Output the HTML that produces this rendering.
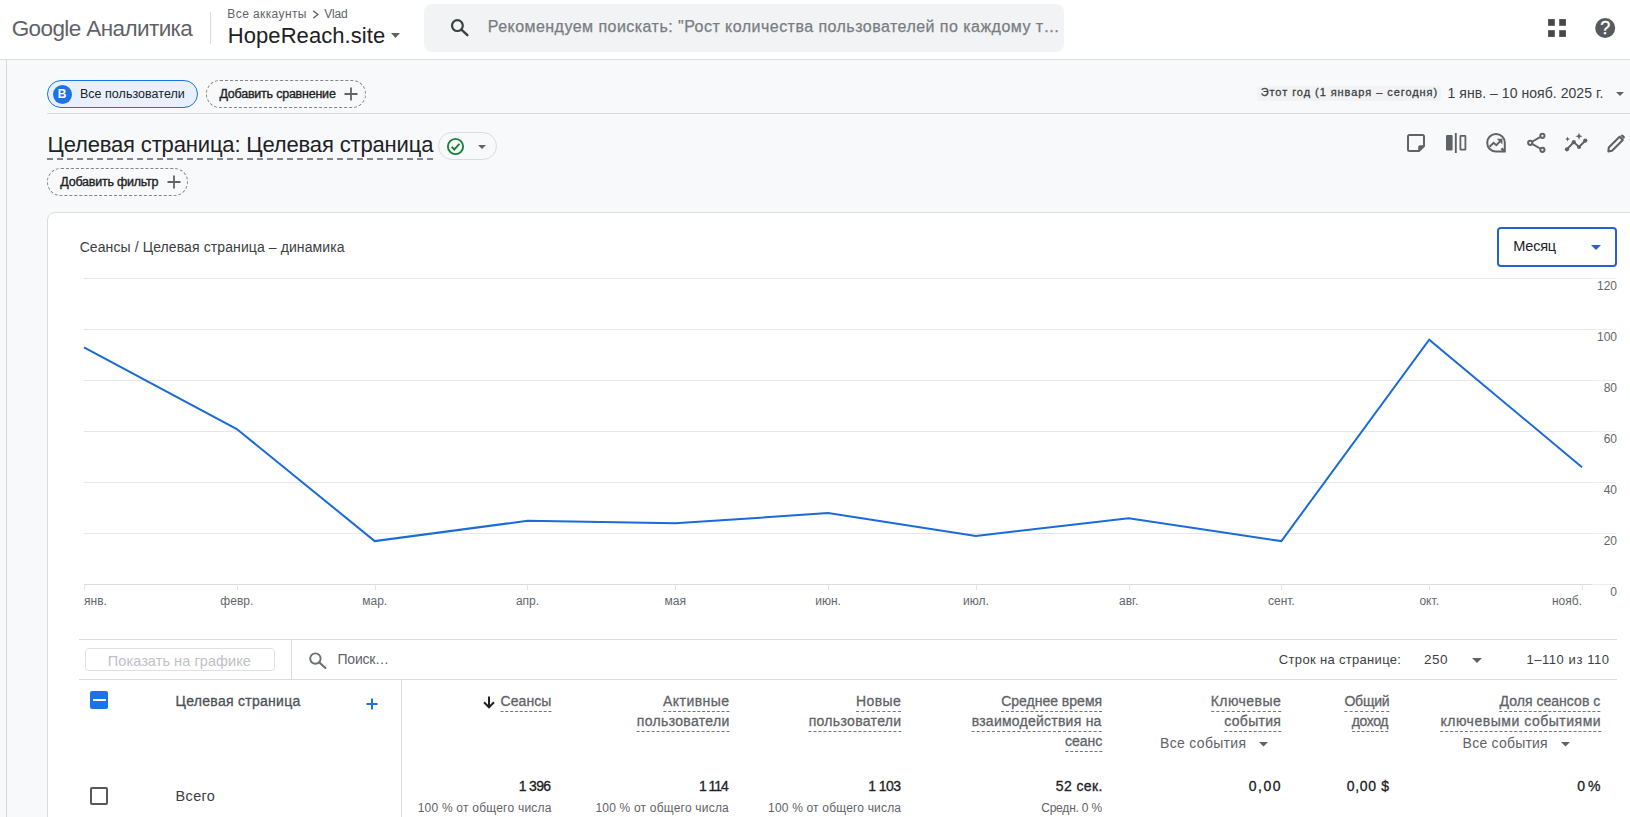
<!DOCTYPE html>
<html lang="ru">
<head>
<meta charset="utf-8">
<title>Google Аналитика</title>
<style>
*{box-sizing:border-box;margin:0;padding:0}
html,body{width:1630px;height:817px;overflow:hidden;background:#f8f9fa;font-family:"Liberation Sans",sans-serif;color:#202124}
#app{position:relative;width:1630px;height:817px;overflow:hidden}
.abs{position:absolute}
.t{position:absolute;white-space:nowrap;line-height:20px;height:20px}
.r{text-align:right}
#hdr{left:0;top:0;width:1630px;height:60px;background:#fff;border-bottom:1px solid #dadce0}
#rail{left:0;top:60px;width:7px;height:757px;background:#f8f9fa;border-right:1px solid #d5d7da}
#search{left:424px;top:4px;width:640px;height:48px;background:#f1f3f4;border-radius:8px}
.chip{position:absolute;height:28px;border-radius:14px}
#card{left:47px;top:212px;width:1600px;height:700px;background:#fff;border:1px solid #dadce0;border-radius:8px}
.hl{position:absolute;height:1px;background:#dadce0}
.vl{position:absolute;width:1px;background:#dadce0}
.du{border-bottom:1px dashed #80868b}
.mh{font-size:14px;color:#5f6368;-webkit-text-stroke:0.3px #5f6368}
.mh::after{content:"";position:absolute;left:0;right:0;top:19.8px;border-top:1px dashed #70757a}
.tv{font-size:14px;color:#202124;-webkit-text-stroke:0.3px #202124}
.ts{font-size:12px;color:#5f6368}
/*FIT*/
#logo{letter-spacing:-0.6px;transform:translateX(0.18px)}
#crumb1{letter-spacing:0.4px;transform:translateX(-0.65px)}
#crumb2{letter-spacing:-0.15px;transform:translateX(1.13px)}
#prop{letter-spacing:0.061px;transform:translateX(-0.18px)}
#sph{letter-spacing:0.463px;transform:translateX(-0.3px)}
#chip1{letter-spacing:0.03px;transform:translateX(-0.56px)}
#chip2{letter-spacing:-0.225px;transform:translateX(0.45px)}
#dlabel{letter-spacing:0.941px;transform:translateX(-0.36px)}
#drange{letter-spacing:0.052px;transform:translateX(-0.49px)}
#title{letter-spacing:-0.155px;transform:translateX(-0.48px)}
#chip3{letter-spacing:-0.233px;transform:translateX(0.32px)}
#ctitle{letter-spacing:0.101px;transform:translateX(0.63px)}
#month{letter-spacing:-0.225px;transform:translateX(0.34px)}
#showbtn{letter-spacing:0.07px;transform:translateX(-1.18px)}
#poisk{letter-spacing:-0.252px;transform:translateX(-0.46px)}
#rows{letter-spacing:0.322px;transform:translateX(-0.14px)}
#n250{letter-spacing:0.45px;transform:translateX(0.0px)}
#pg{letter-spacing:0.573px;transform:translateX(0.61px)}
#dimh{letter-spacing:0.276px;transform:translateX(-0.39px)}
#h0_0{letter-spacing:0.09px;transform:translateX(-0.5px)}
#h1_0{letter-spacing:0.437px;transform:translateX(0.41px)}
#h1_1{letter-spacing:0.319px;transform:translateX(0.6px)}
#h2_0{letter-spacing:0.36px;transform:translateX(0.05px)}
#h2_1{letter-spacing:0.323px;transform:translateX(0.45px)}
#h3_0{letter-spacing:0.0px;transform:translateX(0.09px)}
#h3_1{letter-spacing:0.244px;transform:translateX(-0.34px)}
#h3_2{letter-spacing:0.0px;transform:translateX(0.36px)}
#h4_0{letter-spacing:0.452px;transform:translateX(0.22px)}
#h4_1{letter-spacing:0.3px;transform:translateX(0.27px)}
#h5_0{letter-spacing:-0.225px;transform:translateX(-0.63px)}
#h5_1{letter-spacing:-0.36px;transform:translateX(-1.84px)}
#h6_0{letter-spacing:0.035px;transform:translateX(-0.68px)}
#h6_1{letter-spacing:0.525px;transform:translateX(0.22px)}
#ev1{letter-spacing:0.315px;transform:translateX(-0.96px)}
#ev2{letter-spacing:0.225px;transform:translateX(-0.41px)}
#vsego{letter-spacing:0.324px;transform:translateX(0.57px)}
#v0{letter-spacing:-0.675px;transform:translateX(-1.53px)}
#s0{letter-spacing:0.225px;transform:translateX(-0.32px)}
#s1{letter-spacing:0.202px;transform:translateX(-0.01px)}
#v2{letter-spacing:-0.54px;transform:translateX(-0.5px)}
#s2{letter-spacing:0.18px;transform:translateX(0.18px)}
#v3{letter-spacing:0.375px;transform:translateX(0.68px)}
#s3{letter-spacing:-0.2px;transform:translateX(-0.09px)}
#v4{letter-spacing:1.5px;transform:translateX(0.99px)}
#v5{letter-spacing:0.63px;transform:translateX(-0.41px)}
#v6{letter-spacing:-0.45px;transform:translateX(-1.05px)}
/*ENDFIT*/
.d1{margin:0 -1.1px}
</style>
</head>
<body>
<div id="app">
<!--HEADER-->
<div id="hdr" class="abs"></div>
<div class="t" id="logo" style="left:11.5px;top:14px;height:30px;line-height:30px;font-size:22.5px;color:#5f6368">Google Аналитика</div>
<div class="vl" style="left:210px;top:12px;height:32px;background:#dadce0"></div>
<div class="t" id="crumb1" style="left:228px;top:5px;height:18px;line-height:18px;font-size:12px;color:#5f6368">Все аккаунты</div>
<svg class="abs" style="left:312px;top:9.5px" width="8" height="9" viewBox="0 0 8 9"><path d="M1.2 0.8 L5.8 4.5 L1.2 8.2" fill="none" stroke="#5f6368" stroke-width="1.4"/></svg>
<div class="t" id="crumb2" style="left:323px;top:5px;height:18px;line-height:18px;font-size:12px;color:#5f6368">Vlad</div>
<div class="t" id="prop" style="left:228px;top:20.75px;height:30px;line-height:30px;font-size:22px;color:#202124">HopeReach.site</div>
<svg class="abs" style="left:391px;top:33px" width="9" height="5" viewBox="0 0 9 5"><path d="M0 0 H9 L4.5 5 Z" fill="#5f6368"/></svg>
<div id="search" class="abs"></div>
<svg class="abs" style="left:449px;top:17px" width="22" height="22" viewBox="0 0 22 22"><circle cx="8.4" cy="8.6" r="5.4" fill="none" stroke="#3c4043" stroke-width="2.2"/><path d="M12.4 12.6 L18.4 18.2" stroke="#3c4043" stroke-width="2.4" stroke-linecap="round"/></svg>
<div class="t" id="sph" style="left:488px;top:16.2px;height:22px;line-height:22px;font-size:16px;color:#787d83;-webkit-text-stroke:0.25px #787d83">Рекомендуем поискать: "Рост количества пользователей по каждому т…</div>
<svg class="abs" style="left:1548px;top:19px" width="18" height="18" viewBox="0 0 18 18"><g fill="#46484a"><rect x="0.1" y="0.1" width="6.7" height="6.7"/><rect x="11.2" y="0.1" width="6.7" height="6.7"/><rect x="0.1" y="11.2" width="6.7" height="6.700"/><rect x="11.2" y="11.2" width="6.7" height="6.700"/></g></svg>
<svg class="abs" style="left:1594px;top:17px" width="22" height="22" viewBox="0 0 22 22"><circle cx="11.2" cy="11" r="10" fill="#56595d"/><text x="11.2" y="17.400" text-anchor="middle" font-family="Liberation Sans, sans-serif" font-size="18" fill="#fff" stroke="#fff" stroke-width="0.3">?</text></svg>
<div id="rail" class="abs"></div>
<!--BAR-->
<div class="chip" style="left:47px;top:80px;width:151px;height:28px;background:#e8f0fe;border:1.5px solid #1a73e8"></div>
<div class="abs" style="left:52.5px;top:84.5px;width:19px;height:19px;border-radius:50%;background:#1a73e8"></div>
<div class="t" id="chipB" style="left:52.5px;top:84.5px;width:19px;height:19px;line-height:19px;text-align:center;font-size:12px;font-weight:bold;color:#fff">B</div>
<div class="t" id="chip1" style="left:80.5px;top:84px;font-size:12.5px;color:#202124">Все пользователи</div>
<div class="chip" style="left:206px;top:80px;width:160px;height:28px;border:1px dashed #80868b"></div>
<div class="t" id="chip2" style="left:219px;top:84px;font-size:12.5px;color:#202124;-webkit-text-stroke:0.35px #202124">Добавить сравнение</div>
<svg class="abs" style="left:344px;top:87px" width="14" height="14" viewBox="0 0 14 14"><path d="M7 0.5 V13.5 M0.5 7 H13.5" stroke="#5f6368" stroke-width="1.8" fill="none"/></svg>
<div class="hl" style="left:47px;top:113px;width:1583px"></div>
<div class="abs" style="left:1257px;top:86px;width:184px;height:15px;background:#f1f3f4;border-radius:3px"></div>
<div class="t" id="dlabel" style="left:1261px;top:81.5px;font-size:11px;color:#3c4043;-webkit-text-stroke:0.3px #3c4043">Этот год (1 января – сегодня)</div>
<div class="t" id="drange" style="left:1448px;top:82.5px;font-size:14px;color:#3c4043">1 янв. – 10 нояб. 2025 г.</div>
<svg class="abs" style="left:1616px;top:91.5px" width="8" height="4" viewBox="0 0 8 4"><path d="M0 0 H8 L4 4 Z" fill="#5f6368"/></svg>
<div class="abs" style="left:47px;top:158px;width:387px;height:2px;background:repeating-linear-gradient(90deg,#80868b 0 6px,transparent 6px 10px)"></div>
<div class="t" id="title" style="left:48px;top:129px;height:31px;line-height:31px;font-size:22px;color:#202124">Целевая страница: Целевая страница</div>
<div class="chip" style="left:438px;top:132px;width:59px;height:28px;border:1px solid #dadce0"></div>
<svg class="abs" style="left:446px;top:137px" width="19" height="19" viewBox="0 0 19 19"><circle cx="9.5" cy="9.5" r="7.6" fill="none" stroke="#188038" stroke-width="1.9"/><path d="M5.6 9.8 L8.3 12.5 L13.4 6.9" fill="none" stroke="#188038" stroke-width="1.9"/></svg>
<svg class="abs" style="left:477.5px;top:144.5px" width="8" height="4" viewBox="0 0 8 4"><path d="M0 0 H8 L4 4 Z" fill="#5f6368"/></svg>
<div class="chip" style="left:47px;top:168px;width:141px;height:28px;border:1px dashed #80868b"></div>
<div class="t" id="chip3" style="left:60px;top:172px;font-size:12.5px;color:#202124;-webkit-text-stroke:0.35px #202124">Добавить фильтр</div>
<svg class="abs" style="left:166.5px;top:175px" width="14" height="14" viewBox="0 0 14 14"><path d="M7 0.5 V13.5 M0.5 7 H13.5" stroke="#5f6368" stroke-width="1.8" fill="none"/></svg>
<!--ICONS-->
<svg class="abs" style="left:1404px;top:131px" width="226" height="24" viewBox="1404 131 226 24" fill="none" stroke="#5f6368" stroke-width="2">
<path d="M1409.5 135 H1422.5 Q1424 135 1424 136.500 V146 L1419 151 H1409.500 Q1408 151 1408 149.500 V136.500 Q1408 135 1409.500 135 Z"/>
<path d="M1424 146 H1419 V151 Z" fill="#5f6368" stroke="none"/>
<path d="M1419 151 V147 Q1419 146 1420 146 H1424" stroke-width="1.6"/>
<rect x="1446" y="135" width="6.6" height="15.6" rx="1" fill="#5f6368" stroke="none"/>
<path d="M1455.8 133 V153" stroke-width="1.9"/>
<rect x="1460.400" y="135.900" width="5" height="13.800" rx="0.500" stroke-width="1.8"/>
<path d="M1496 134 A8.800 8.800 0 1 0 1496 151.600 H1504.800 V142.800 A8.800 8.800 0 0 0 1496 134 Z"/>
<path d="M1489.600 146.800 L1493.600 142.800 L1496.400 145.200 L1500 141.400" stroke-width="2"/>
<path d="M1496.800 138.800 H1502.400 V144.400 Z" fill="#5f6368" stroke="none"/>
<path d="M1501.500 148.300 L1504.800 151.600" stroke-width="2.6"/>
<circle cx="1542.400" cy="135.800" r="2.100" stroke-width="2"/>
<circle cx="1530.200" cy="142.800" r="2.100" stroke-width="2"/>
<circle cx="1542.400" cy="149.800" r="2.100" stroke-width="2"/>
<path d="M1540.100 137.100 L1532.500 141.500 M1532.500 144.100 L1540.100 148.500" stroke-width="2"/>
<path d="M1567 149.200 L1573.800 142.100 L1579 146.900 L1585.300 140.700" stroke-width="2"/>
<g fill="#5f6368" stroke="none">
<circle cx="1567" cy="149.300" r="2.1"/><circle cx="1573.800" cy="142.200" r="2.1"/><circle cx="1579" cy="147" r="2.1"/><circle cx="1585.300" cy="140.600" r="2.1"/>
<path d="M1579 132.800 L1580 135.300 L1582.500 136.300 L1580 137.300 L1579 139.800 L1578 137.300 L1575.500 136.300 L1578 135.300 Z"/>
<path d="M1567.600 136.600 L1568.300 138.300 L1570 139 L1568.300 139.700 L1567.600 141.400 L1566.900 139.700 L1565.200 139 L1566.900 138.300 Z"/>
</g>
<path d="M1608.400 151.400 L1608.800 147.600 L1619.600 136.800 L1622.800 140 L1612 150.800 Z" stroke-width="2.100" stroke-linejoin="round"/>
<path d="M1620.400 135.800 L1621.400 134.800 Q1622.300 134 1623.200 134.900 L1624.600 136.300 Q1625.400 137.200 1624.600 138 L1623.700 139 Z" fill="#5f6368" stroke="none"/>
</svg>
<!--CARD-->
<div id="card" class="abs"></div>
<!--CHART-->
<div class="t" id="ctitle" style="left:79px;top:237px;font-size:14px;color:#3c4043">Сеансы / Целевая страница – динамика</div>
<div class="abs" style="left:1497px;top:227px;width:120px;height:40px;border:2px solid #2464c8;border-radius:4px"></div>
<div class="t" id="month" style="left:1513px;top:236px;font-size:14.5px;color:#202124">Месяц</div>
<svg class="abs" style="left:1591px;top:245px" width="10" height="5" viewBox="0 0 10 5"><path d="M0 0 H10 L5 5 Z" fill="#2464c8"/></svg>
<svg class="abs" style="left:0;top:0" width="1630" height="817" viewBox="0 0 1630 817" font-family="Liberation Sans, sans-serif" font-size="12" fill="#63676b">
<line x1="84" y1="278.5" x2="1592" y2="278.5" stroke="#e7e7e7" stroke-width="1"/><line x1="1592" y1="278.5" x2="1616" y2="278.5" stroke="#eeeeee" stroke-width="1"/>
<line x1="84" y1="329.5" x2="1592" y2="329.5" stroke="#e7e7e7" stroke-width="1"/><line x1="1592" y1="329.5" x2="1616" y2="329.5" stroke="#eeeeee" stroke-width="1"/>
<line x1="84" y1="380.5" x2="1592" y2="380.5" stroke="#e7e7e7" stroke-width="1"/><line x1="1592" y1="380.5" x2="1616" y2="380.5" stroke="#eeeeee" stroke-width="1"/>
<line x1="84" y1="431.5" x2="1592" y2="431.5" stroke="#e7e7e7" stroke-width="1"/><line x1="1592" y1="431.5" x2="1616" y2="431.5" stroke="#eeeeee" stroke-width="1"/>
<line x1="84" y1="482.5" x2="1592" y2="482.5" stroke="#e7e7e7" stroke-width="1"/><line x1="1592" y1="482.5" x2="1616" y2="482.5" stroke="#eeeeee" stroke-width="1"/>
<line x1="84" y1="533.5" x2="1592" y2="533.5" stroke="#e7e7e7" stroke-width="1"/><line x1="1592" y1="533.5" x2="1616" y2="533.5" stroke="#eeeeee" stroke-width="1"/>
<line x1="84" y1="584.5" x2="1592" y2="584.5" stroke="#dcdcdc" stroke-width="1"/><line x1="1592" y1="584.5" x2="1616" y2="584.5" stroke="#eeeeee" stroke-width="1"/>
<line x1="84.5" y1="584" x2="84.5" y2="590" stroke="#e4e4e4" stroke-width="1"/>
<line x1="237.5" y1="584" x2="237.5" y2="590" stroke="#e4e4e4" stroke-width="1"/>
<line x1="375.5" y1="584" x2="375.5" y2="590" stroke="#e4e4e4" stroke-width="1"/>
<line x1="527.5" y1="584" x2="527.5" y2="590" stroke="#e4e4e4" stroke-width="1"/>
<line x1="675.5" y1="584" x2="675.5" y2="590" stroke="#e4e4e4" stroke-width="1"/>
<line x1="828.5" y1="584" x2="828.5" y2="590" stroke="#e4e4e4" stroke-width="1"/>
<line x1="976.5" y1="584" x2="976.5" y2="590" stroke="#e4e4e4" stroke-width="1"/>
<line x1="1129.5" y1="584" x2="1129.5" y2="590" stroke="#e4e4e4" stroke-width="1"/>
<line x1="1281.5" y1="584" x2="1281.5" y2="590" stroke="#e4e4e4" stroke-width="1"/>
<line x1="1429.5" y1="584" x2="1429.5" y2="590" stroke="#e4e4e4" stroke-width="1"/>
<line x1="1582.5" y1="584" x2="1582.5" y2="590" stroke="#e4e4e4" stroke-width="1"/>
<text id="yl0" x="1617" y="290.0" text-anchor="end">120</text>
<text id="yl1" x="1617" y="341.0" text-anchor="end">100</text>
<text id="yl2" x="1617" y="392.0" text-anchor="end">80</text>
<text id="yl3" x="1617" y="443.0" text-anchor="end">60</text>
<text id="yl4" x="1617" y="494.0" text-anchor="end">40</text>
<text id="yl5" x="1617" y="545.0" text-anchor="end">20</text>
<text id="yl6" x="1617" y="596.0" text-anchor="end">0</text>
<text id="xl0" x="84.0" y="605" text-anchor="start">янв.</text>
<text id="xl1" x="236.8" y="605" text-anchor="middle">февр.</text>
<text id="xl2" x="374.7" y="605" text-anchor="middle">мар.</text>
<text id="xl3" x="527.5" y="605" text-anchor="middle">апр.</text>
<text id="xl4" x="675.3" y="605" text-anchor="middle">мая</text>
<text id="xl5" x="828.1" y="605" text-anchor="middle">июн.</text>
<text id="xl6" x="975.9" y="605" text-anchor="middle">июл.</text>
<text id="xl7" x="1128.7" y="605" text-anchor="middle">авг.</text>
<text id="xl8" x="1281.4" y="605" text-anchor="middle">сент.</text>
<text id="xl9" x="1429.2" y="605" text-anchor="middle">окт.</text>
<text id="xl10" x="1582.0" y="605" text-anchor="end">нояб.</text>
<polyline points="84.0,347.4 236.8,429.0 374.7,541.1 527.5,520.8 675.3,523.3 828.1,513.1 975.9,536.0 1128.7,518.2 1281.4,541.1 1429.2,339.7 1582.0,467.2" fill="none" stroke="#1a6ad8" stroke-width="2" stroke-linejoin="miter"/>
</svg>
<!--TABLE-->
<div class="hl" style="left:79px;top:639px;width:1538px"></div>
<div class="hl" style="left:79px;top:679px;width:1538px"></div>
<div class="vl" style="left:291px;top:639px;height:41px"></div>
<div class="vl" style="left:401px;top:680px;height:140px"></div>
<div class="abs" style="left:85px;top:648px;width:190px;height:23px;border:1px solid #e0e0e0;border-radius:4px"></div>
<div class="t" id="showbtn" style="left:109px;top:650.5px;font-size:14.5px;color:#bdc1c6">Показать на графике</div>
<svg class="abs" style="left:307px;top:650px" width="22" height="22" viewBox="0 0 22 22"><circle cx="8.4" cy="8.6" r="5.2" fill="none" stroke="#6b7075" stroke-width="1.9"/><path d="M12.2 12.4 L18.4 18" stroke="#6b7075" stroke-width="2.1" stroke-linecap="round"/></svg>
<div class="t" id="poisk" style="left:338px;top:648.5px;font-size:14px;color:#5f6368">Поиск…</div>
<div class="t" id="rows" style="left:1279px;top:649.5px;font-size:13px;color:#3c4043">Строк на странице:</div>
<div class="t" id="n250" style="left:1424px;top:649.5px;font-size:13.5px;color:#3c4043">250</div>
<svg class="abs" style="left:1471.5px;top:658px" width="10" height="5" viewBox="0 0 10 5"><path d="M0 0 H10 L5 5 Z" fill="#5f6368"/></svg>
<div class="t r" id="pg" style="right:21px;top:649.5px;font-size:13px;color:#3c4043">1–110 из 110</div>
<div class="abs" style="left:90px;top:691px;width:18px;height:18px;border-radius:2px;background:#1a73e8"></div>
<div class="abs" style="left:92.5px;top:699px;width:13px;height:2px;background:#fff"></div>
<div class="t" id="dimh" style="left:176px;top:691.3px;font-size:14px;color:#4d5156;-webkit-text-stroke:0.3px #4d5156">Целевая страница</div>
<svg class="abs" style="left:366px;top:697.5px" width="12" height="12" viewBox="0 0 12 12"><path d="M6 0.5 V11.5 M0.5 6 H11.5" stroke="#1a73e8" stroke-width="2" fill="none"/></svg>
<svg class="abs" style="left:483px;top:696px" width="12" height="13" viewBox="0 0 12 13"><path d="M6 0.5 V11 M1 6.3 L6 11.3 L11 6.3" stroke="#202124" stroke-width="2" fill="none"/></svg>
<div class="t r mh" id="h0_0" style="right:1078px;top:691.3px">Сеансы</div>
<div class="t r mh" id="h1_0" style="right:901px;top:691.3px">Активные</div>
<div class="t r mh" id="h1_1" style="right:901px;top:711.3px">пользователи</div>
<div class="t r mh" id="h2_0" style="right:729px;top:691.3px">Новые</div>
<div class="t r mh" id="h2_1" style="right:729px;top:711.3px">пользователи</div>
<div class="t r mh" id="h3_0" style="right:528px;top:691.3px">Среднее время</div>
<div class="t r mh" id="h3_1" style="right:528px;top:711.3px">взаимодействия на</div>
<div class="t r mh" id="h3_2" style="right:528px;top:731.3px">сеанс</div>
<div class="t r mh" id="h4_0" style="right:349px;top:691.3px">Ключевые</div>
<div class="t r mh" id="h4_1" style="right:349px;top:711.3px">события</div>
<div class="t r mh" id="h5_0" style="right:240px;top:691.3px">Общий</div>
<div class="t r mh" id="h5_1" style="right:240px;top:711.3px">доход</div>
<div class="t r mh" id="h6_0" style="right:29px;top:691.3px">Доля сеансов с</div>
<div class="t r mh" id="h6_1" style="right:29px;top:711.3px">ключевыми событиями</div>
<div class="t" id="ev1" style="left:1161px;top:732.5px;font-size:14px;color:#5f6368">Все события</div>
<svg class="abs" style="left:1259px;top:742px" width="9" height="4.5" viewBox="0 0 10 5"><path d="M0 0 H10 L5 5 Z" fill="#5f6368"/></svg>
<div class="t" id="ev2" style="left:1463px;top:732.5px;font-size:14px;color:#5f6368">Все события</div>
<svg class="abs" style="left:1561px;top:742px" width="9" height="4.5" viewBox="0 0 10 5"><path d="M0 0 H10 L5 5 Z" fill="#5f6368"/></svg>
<div class="abs" style="left:90px;top:787px;width:18px;height:18px;border-radius:2px;border:2px solid #55585c"></div>
<div class="t" id="vsego" style="left:175px;top:786px;font-size:14.5px;color:#3c4043">Всего</div>
<div class="t r tv" id="v0" style="right:1078px;top:776px">1 396</div>
<div class="t r ts" id="s0" style="right:1078px;top:797.5px">100 % от общего числа</div>
<div class="t r tv" id="v1" style="right:901.3px;top:776px"><span class="d1">1</span> <span class="d1">1</span><span class="d1">1</span>4</div>
<div class="t r ts" id="s1" style="right:901px;top:797.5px">100 % от общего числа</div>
<div class="t r tv" id="v2" style="right:729px;top:776px">1 103</div>
<div class="t r ts" id="s2" style="right:729px;top:797.5px">100 % от общего числа</div>
<div class="t r tv" id="v3" style="right:528px;top:776px">52 сек.</div>
<div class="t r ts" id="s3" style="right:528px;top:797.5px">Средн. 0 %</div>
<div class="t r tv" id="v4" style="right:349px;top:776px">0,00</div>
<div class="t r tv" id="v5" style="right:240px;top:776px">0,00 $</div>
<div class="t r tv" id="v6" style="right:29px;top:776px">0 %</div>
</div>
</body>
</html>
